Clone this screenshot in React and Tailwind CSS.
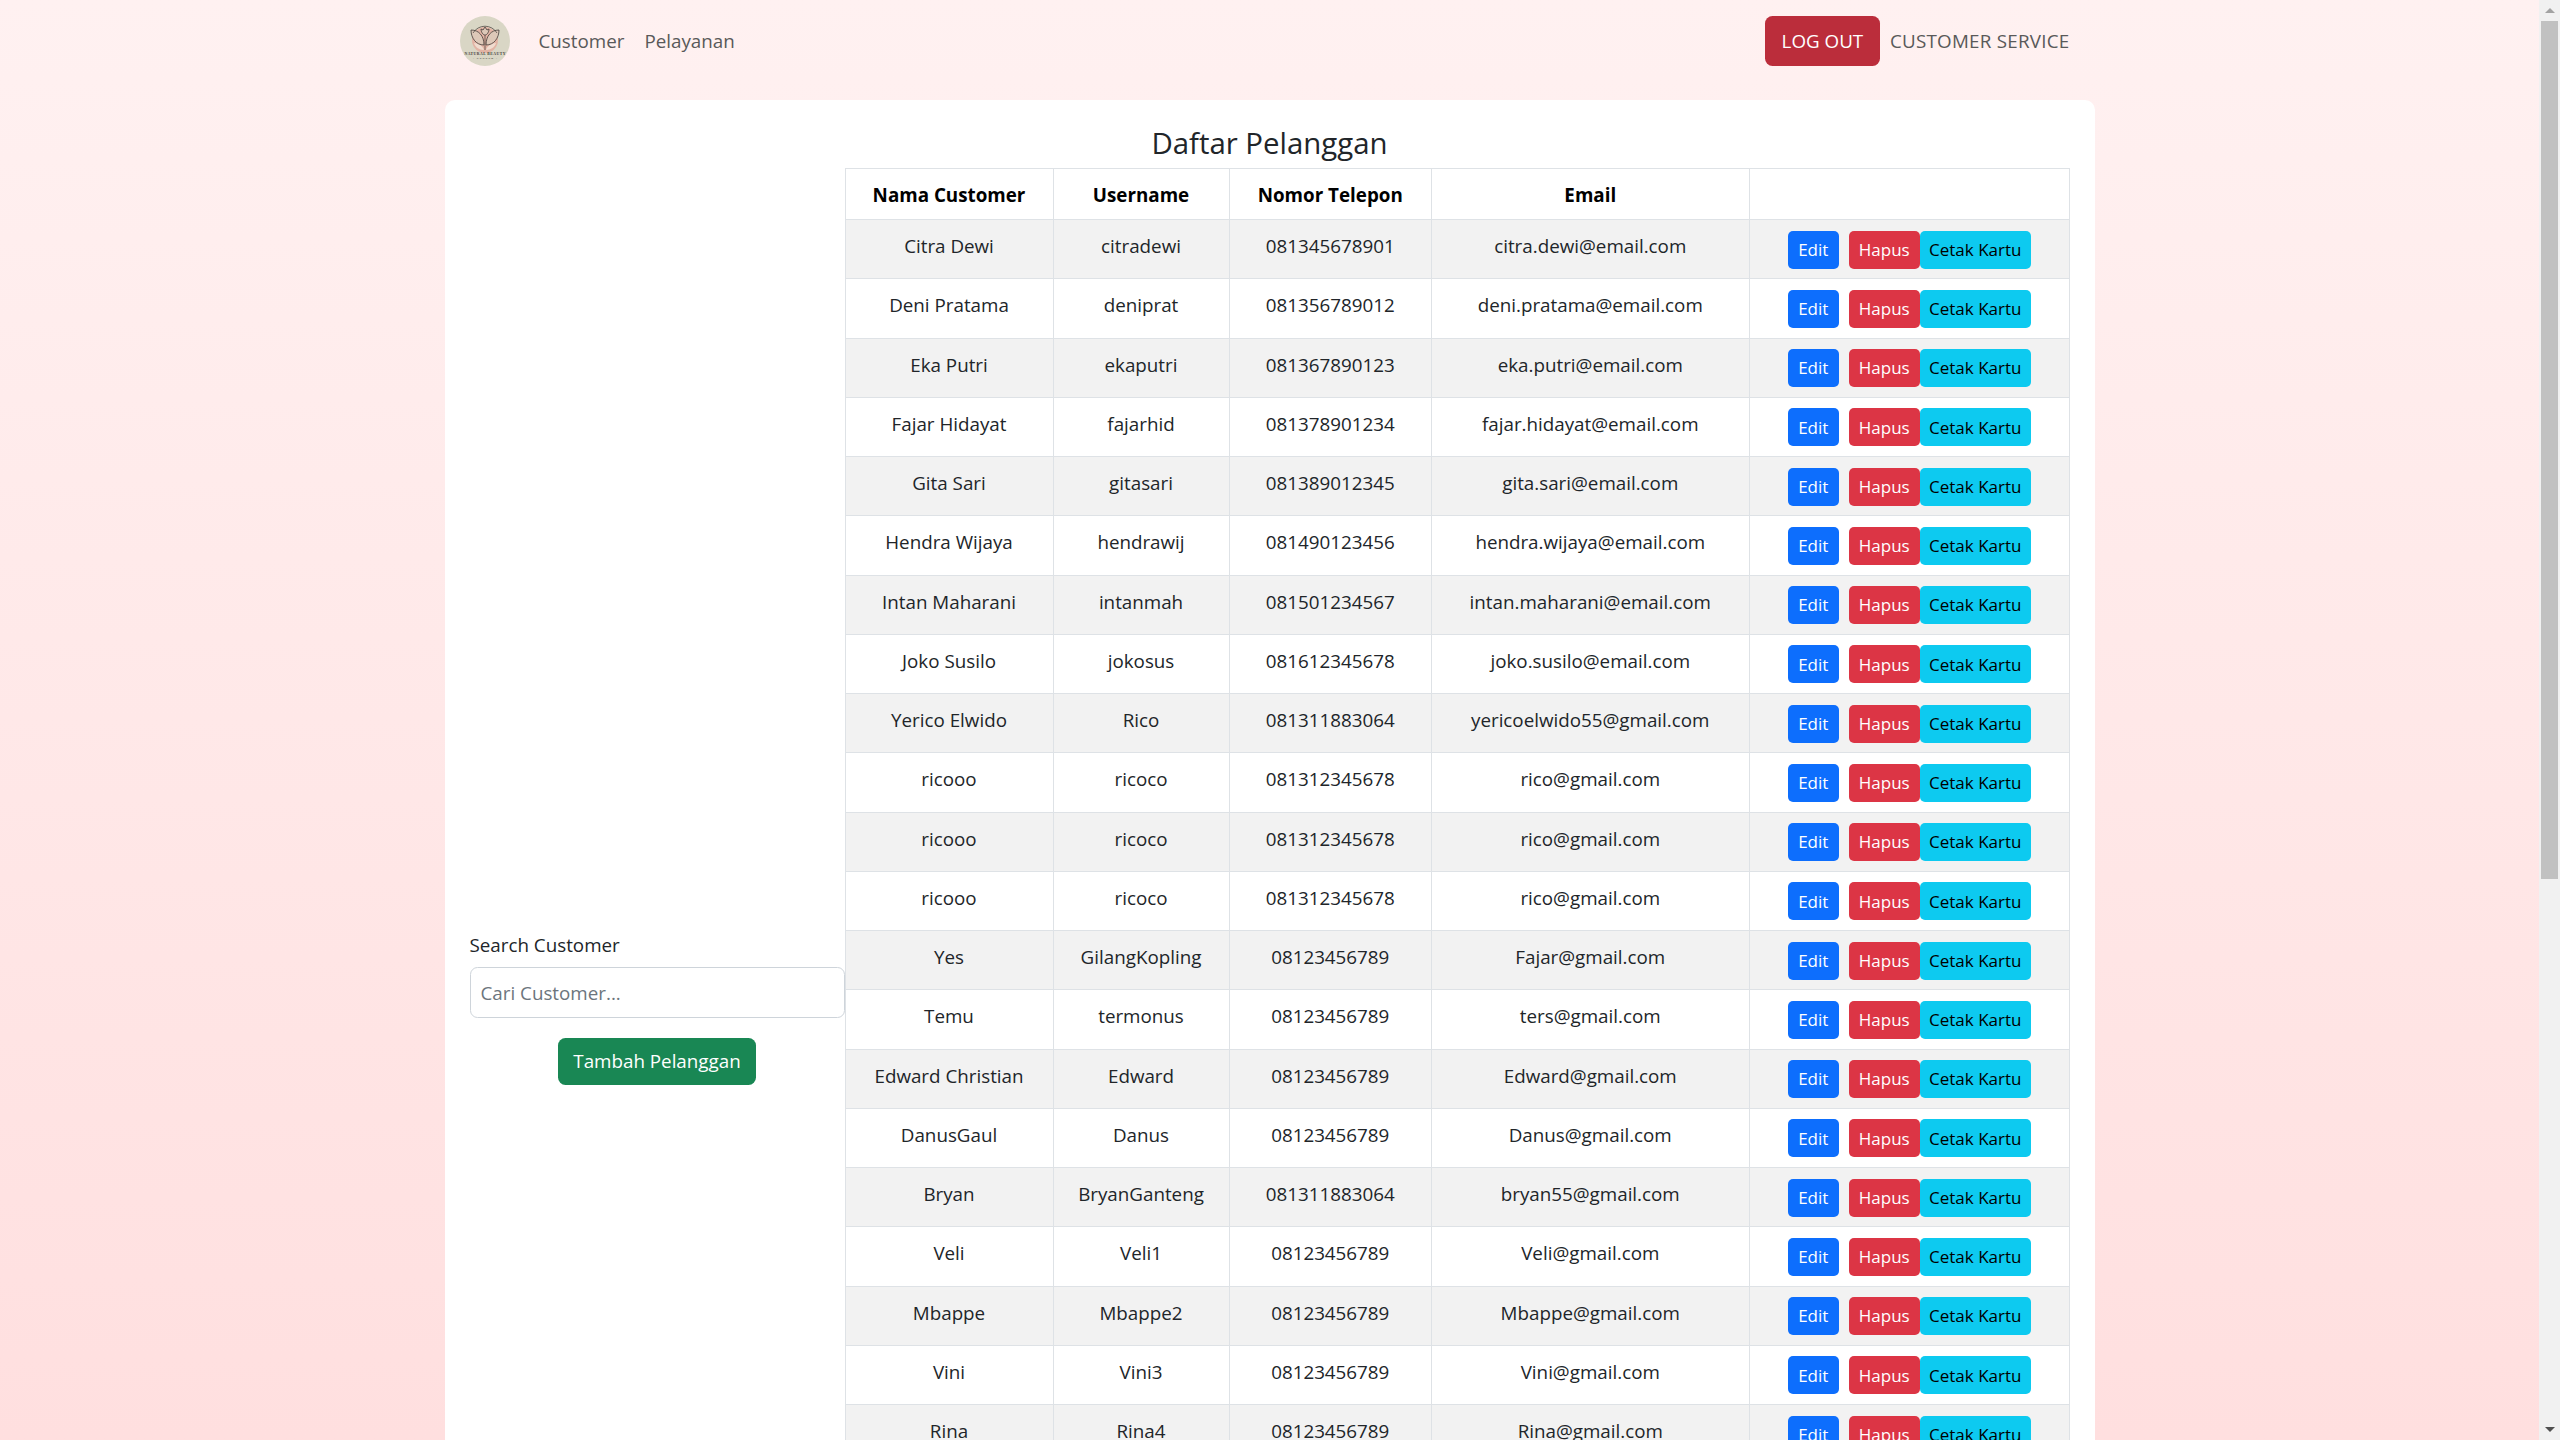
import React from "react";

const customers = [
  ["Citra Dewi", "citradewi", "081345678901", "citra.dewi@email.com"],
  ["Deni Pratama", "deniprat", "081356789012", "deni.pratama@email.com"],
  ["Eka Putri", "ekaputri", "081367890123", "eka.putri@email.com"],
  ["Fajar Hidayat", "fajarhid", "081378901234", "fajar.hidayat@email.com"],
  ["Gita Sari", "gitasari", "081389012345", "gita.sari@email.com"],
  ["Hendra Wijaya", "hendrawij", "081490123456", "hendra.wijaya@email.com"],
  ["Intan Maharani", "intanmah", "081501234567", "intan.maharani@email.com"],
  ["Joko Susilo", "jokosus", "081612345678", "joko.susilo@email.com"],
  ["Yerico Elwido", "Rico", "081311883064", "yericoelwido55@gmail.com"],
  ["ricooo", "ricoco", "081312345678", "rico@gmail.com"],
  ["ricooo", "ricoco", "081312345678", "rico@gmail.com"],
  ["ricooo", "ricoco", "081312345678", "rico@gmail.com"],
  ["Yes", "GilangKopling", "08123456789", "Fajar@gmail.com"],
  ["Temu", "termonus", "08123456789", "ters@gmail.com"],
  ["Edward Christian", "Edward", "08123456789", "Edward@gmail.com"],
  ["DanusGaul", "Danus", "08123456789", "Danus@gmail.com"],
  ["Bryan", "BryanGanteng", "081311883064", "bryan55@gmail.com"],
  ["Veli", "Veli1", "08123456789", "Veli@gmail.com"],
  ["Mbappe", "Mbappe2", "08123456789", "Mbappe@gmail.com"],
  ["Vini", "Vini3", "08123456789", "Vini@gmail.com"],
  ["Rina", "Rina4", "08123456789", "Rina@gmail.com"],
];

const Logo = () => (
  <svg viewBox="0 0 50 50" className="w-[50px] h-[50px]">
    <circle cx="25" cy="25" r="25" fill="#d9d6c5" />
    <circle cx="25" cy="24" r="13" fill="#e2b3a4" />
    <path d="M14 27c4 0 9 3 10 7-5 0-9-3-10-7zM36 27c-4 0-9 3-10 7 5 0 9-3 10-7z" fill="#f0dccf" />
    <path d="M11 14c8 0 13 6 13 15-8 0-13-7-13-15zM39 14c-8 0-13 6-13 15 8 0 13-7 13-15z" fill="#ddc8b8" stroke="#443c38" strokeWidth="0.8" />
    <path d="M21 13c0 3 2 6 4 6s4-3 4-6l-2 1-2-3-2 3z" fill="#ddc8b8" stroke="#443c38" strokeWidth="0.8" />
    <path d="M25 19v15M13 17a14 14 0 0 1 24 0" fill="none" stroke="#443c38" strokeWidth="0.7" />
    <text x="25" y="38.5" textAnchor="middle" textLength="41" fontSize="3.8" fontWeight="700" fill="#443c38" fontFamily="Liberation Serif, serif">NATURAL BEAUTY</text>
    <text x="25" y="43" textAnchor="middle" textLength="24" fontSize="2.8" fontWeight="700" fill="#443c38" fontFamily="Liberation Serif, serif">- CENTER -</text>
  </svg>
);

const App = () => {
  return (
    <div className="flex h-screen overflow-hidden font-['Open_Sans',sans-serif] text-[18.8px] text-[#212529]">
      <div className="flex-1 min-w-0 overflow-hidden bg-linear-to-b from-[#fff1f1] to-[#ffdfdf]">
        {/* Navbar */}
        <nav className="w-[1650px] mx-auto h-[82px] flex items-center pl-[15px] pr-[25px]">
          <Logo />
          <a className="ml-[29px] pt-[1px] text-[#595959]">Customer</a>
          <a className="ml-[20px] pt-[1px] text-[#595959]">Pelayanan</a>
          <button className="ml-auto w-[115px] h-[50px] pt-[1px] rounded-[7.5px] bg-[#bb2d3b] text-white">LOG OUT</button>
          <a className="ml-[10px] pt-[1px] text-[#595959] tracking-[0.25px]">CUSTOMER SERVICE</a>
        </nav>

        {/* Card */}
        <div className="w-[1650px] mx-auto mt-[18px] bg-white rounded-t-[10px] px-[25px] pt-[20px]">
          <h3 className="text-center text-[29.4px] leading-[46px] mb-[2px] font-medium">Daftar Pelanggan</h3>
          <div className="flex">
            <div className="w-[375px] shrink-0 pt-[762px]">
              <label className="block leading-[30px]">Search Customer</label>
              <input
                placeholder="Cari Customer..."
                className="mt-[7px] block w-full h-[51px] px-[10px] border border-[#ced4da] rounded-[7.5px] placeholder:text-[#6c757d] outline-none"
              />
              <div className="flex justify-center mt-[20px]">
                <button className="w-[198px] h-[47px] rounded-[7.5px] bg-[#198754] text-white">Tambah Pelanggan</button>
              </div>
            </div>
            <table className="w-[1224.5px] table-fixed border-collapse text-center">
              <colgroup>
                <col className="w-[208px]" />
                <col className="w-[176px]" />
                <col className="w-[202.5px]" />
                <col className="w-[317.5px]" />
                <col className="w-[320.5px]" />
              </colgroup>
              <thead>
                <tr className="h-[51px] text-black">
                  <th className="border border-[#dee2e6] font-bold pt-[2px]">Nama Customer</th>
                  <th className="border border-[#dee2e6] font-bold pt-[2px]">Username</th>
                  <th className="border border-[#dee2e6] font-bold pt-[2px]">Nomor Telepon</th>
                  <th className="border border-[#dee2e6] font-bold pt-[2px]">Email</th>
                  <th className="border border-[#dee2e6]"></th>
                </tr>
              </thead>
              <tbody>
                {customers.map((c, i) => (
                  <tr key={i} className={`h-[59.25px] ${i % 2 === 0 ? "bg-[#f2f2f2]" : "bg-white"}`}>
                    {c.map((v, j) => (
                      <td key={j} className="border border-[#dee2e6] align-top pt-[11px] pb-[10px] leading-[30px]">{v}</td>
                    ))}
                    <td className="border border-[#dee2e6] align-top pt-[10.5px]">
                      <div className="flex justify-center text-[17px]">
                        <button className="w-[51px] h-[38px] rounded-[5px] bg-[#0d6efd] text-white">Edit</button>
                        <button className="ml-[10px] w-[71px] h-[38px] rounded-[5px] bg-[#dc3545] text-white">Hapus</button>
                        <button className="w-[111px] h-[38px] rounded-[5px] bg-[#0dcaf0] text-black">Cetak Kartu</button>
                      </div>
                    </td>
                  </tr>
                ))}
              </tbody>
            </table>
          </div>
        </div>
      </div>

      {/* Scrollbar */}
      <div className="w-[21px] shrink-0 h-screen bg-[#f1f1f1] flex flex-col">
        <div className="h-[21px] flex items-center justify-center">
          <div className="w-0 h-0 border-x-[5px] border-x-transparent border-b-[5px] border-b-[#a3a3a3]"></div>
        </div>
        <div className="mx-[2px] h-[858px] bg-[#c1c1c1]"></div>
        <div className="mt-auto h-[21px] flex items-center justify-center">
          <div className="w-0 h-0 border-x-[5px] border-x-transparent border-t-[5px] border-t-[#505050]"></div>
        </div>
      </div>
    </div>
  );
};

export default App;
